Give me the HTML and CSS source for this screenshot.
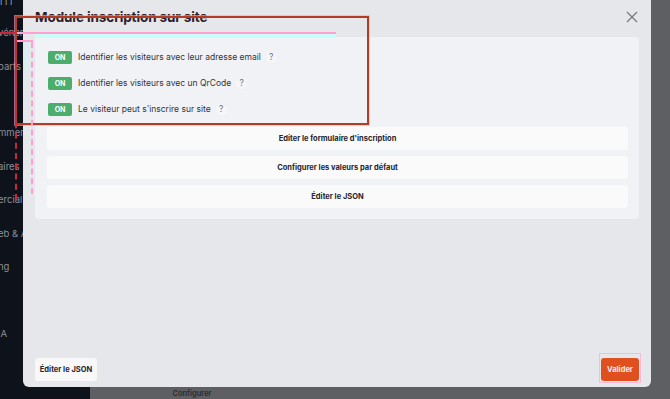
FILE: index.html
```html
<!DOCTYPE html>
<html lang="fr">
<head>
    <meta charset="UTF-8">
    <meta name="viewport" content="width=device-width, initial-scale=1.0">
    <title>Module inscription sur site</title>
    <link rel="stylesheet" href="styles.css">
</head>
<body>

    <div class="app">
        <nav class="sidebar">
            <div class="nav-top">ı ı ı</div>
            <div class="nav-item">vénements</div>
            <div class="nav-item">parts</div>
            <div class="nav-item gap">mmerces</div>
            <div class="nav-item">aires</div>
            <div class="nav-item">ercial</div>
            <div class="nav-item">eb &amp; Apps</div>
            <div class="nav-item">ng</div>
            <div class="nav-item gap">IA</div>
        </nav>
        <main class="main">
            <div class="main-bottom">Configurer</div>
        </main>
    </div>

    <div class="modal">
        <div class="modal-header">
            <h2 class="modal-title">Module inscription sur site</h2>
            <svg class="close" width="12" height="12" viewBox="0 0 12 12">
                <path d="M1 1 L11 11 M11 1 L1 11" stroke="#7a7b80" stroke-width="1.3" fill="none"/>
            </svg>
        </div>

        <div class="panel">
            <div class="option">
                <span class="badge">ON</span>
                <span class="label">Identifier les visiteurs avec leur adresse email</span>
                <span class="help">?</span>
            </div>
            <div class="option">
                <span class="badge">ON</span>
                <span class="label">Identifier les visiteurs avec un QrCode</span>
                <span class="help">?</span>
            </div>
            <div class="option">
                <span class="badge">ON</span>
                <span class="label">Le visiteur peut s'inscrire sur site</span>
                <span class="help">?</span>
            </div>

            <div class="actions">
                <button class="wide-btn">Editer le formulaire d'inscription</button>
                <button class="wide-btn">Configurer les valeurs par défaut</button>
                <button class="wide-btn">Éditer le JSON</button>
            </div>
        </div>

        <div class="modal-footer">
            <button class="btn-light">Éditer le JSON</button>
            <button class="btn-primary">Valider</button>
        </div>
    </div>

    <!-- annotation marks drawn over the screenshot -->
    <div class="mark mark-rect"></div>
    <div class="mark mark-pink-line"></div>
    <div class="mark mark-cyan-band"></div>
    <div class="mark mark-red-left"></div>
    <div class="mark mark-pink-short"></div>
    <div class="mark mark-red-dash"></div>
    <div class="mark mark-pink-dash"></div>
    <div class="mark mark-cyan-side"></div>
    <div class="mark mark-valider"></div>

</body>
</html>
```

FILE: styles.css
```css
body {
    margin: 0;
    width: 670px;
    height: 399px;
    overflow: hidden;
    font-family: Inter, "Noto Sans", sans-serif;
    background-color: #5e5f62;
    position: relative;
}

.app {
    display: flex;
    height: 399px;
}

.sidebar {
    width: 90px;
    flex-shrink: 0;
    background-color: #0e121a;
    color: #8c9099;
    font-size: 9.5px;
    overflow: hidden;
}

.nav-top {
    height: 16px;
    line-height: 4px;
    color: #9a9ea6;
    overflow: hidden;
}

.nav-item {
    height: 33.5px;
    line-height: 33.5px;
    white-space: nowrap;
    margin-left: -2px;
}

.nav-item.gap {
    margin-top: 33px;
}

.main {
    flex: 1;
    display: flex;
    align-items: flex-end;
}

.main-bottom {
    width: 204px;
    text-align: center;
    font-size: 7.5px;
    font-weight: 600;
    color: #2b2c30;
    height: 11px;
    line-height: 11px;
}

/* modal */
.modal {
    position: absolute;
    left: 23px;
    top: -6px;
    width: 628px;
    height: 393px;
    background-color: #e6e7ea;
    border-radius: 6px;
    box-sizing: border-box;
    padding: 6px 12px 6px 12px;
    display: flex;
    flex-direction: column;
}

.modal-header {
    display: flex;
    align-items: center;
    justify-content: space-between;
    height: 34px;
    margin-bottom: 3px;
}

.modal-title {
    margin: 0;
    font-size: 13.5px;
    font-weight: 700;
    color: #2e1d28;
    letter-spacing: -0.1px;
}

.close {
    margin-right: 1px;
}

.panel {
    background-color: #f1f2f5;
    border-radius: 4px;
    padding: 7px 11px 11px 12px;
}

.option {
    display: flex;
    align-items: center;
    height: 26px;
    font-size: 8.5px;
    color: #34343c;
}

.badge {
    width: 24px;
    height: 13px;
    line-height: 13px;
    text-align: center;
    background-color: #4cad6c;
    color: #ffffff;
    font-size: 7px;
    font-weight: 700;
    border-radius: 2px;
    margin-left: 1px;
    margin-right: 6px;
}

.help {
    width: 11px;
    height: 11px;
    line-height: 11px;
    text-align: center;
    border-radius: 50%;
    background-color: #f6f6f8;
    color: #707078;
    font-size: 8.5px;
    margin-left: 5px;
}

.actions {
    display: flex;
    flex-direction: column;
    gap: 6px;
    margin-top: 5px;
}

.wide-btn {
    height: 23px;
    border: none;
    border-radius: 3px;
    background-color: #fafafb;
    font-family: inherit;
    font-size: 7.5px;
    font-weight: 700;
    color: #25252e;
}

.modal-footer {
    margin-top: auto;
    display: flex;
    justify-content: space-between;
    align-items: flex-end;
}

.btn-light,
.btn-primary {
    height: 23px;
    border: none;
    border-radius: 3px;
    font-family: inherit;
    font-size: 7.5px;
    font-weight: 700;
    white-space: nowrap;
    padding: 0;
}

.btn-light {
    width: 62px;
    background-color: #f8f8f9;
    color: #25252e;
}

.btn-primary {
    width: 38px;
    background-color: #df501e;
    color: #fde8ee;
}

/* annotation overlays */
.mark {
    position: absolute;
    pointer-events: none;
}

.mark-rect {
    left: 15px;
    top: 16px;
    width: 350px;
    height: 105px;
    border: 2px solid #b23c24;
    box-shadow: 0 0 0 1px rgba(255, 160, 210, 0.6);
}

.mark-pink-line {
    left: 17px;
    top: 32px;
    width: 319px;
    height: 2px;
    background-color: #ff9fd2;
}

.mark-cyan-band {
    left: 35px;
    top: 34px;
    width: 301px;
    height: 4px;
    background-color: #c9fff6;
}

.mark-red-left {
    left: 0;
    top: 32px;
    width: 15px;
    height: 2px;
    background-color: #c8283a;
}

.mark-pink-short {
    left: 15px;
    top: 40px;
    width: 18px;
    height: 2px;
    background-color: #ff9fd2;
}

.mark-red-dash {
    left: 15px;
    top: 40px;
    width: 0;
    height: 160px;
    border-left: 2px dashed #c8283a;
}

.mark-pink-dash {
    left: 31px;
    top: 42px;
    width: 0;
    height: 152px;
    border-left: 2px dashed #ff9fd2;
}

.mark-cyan-side {
    left: 24px;
    top: 42px;
    width: 6px;
    height: 28px;
    background-color: rgba(200, 255, 246, 0.35);
}

.mark-valider {
    left: 599px;
    top: 353px;
    width: 42px;
    height: 30px;
    border: 1px solid rgba(255, 170, 210, 0.7);
    box-sizing: border-box;
}
```
